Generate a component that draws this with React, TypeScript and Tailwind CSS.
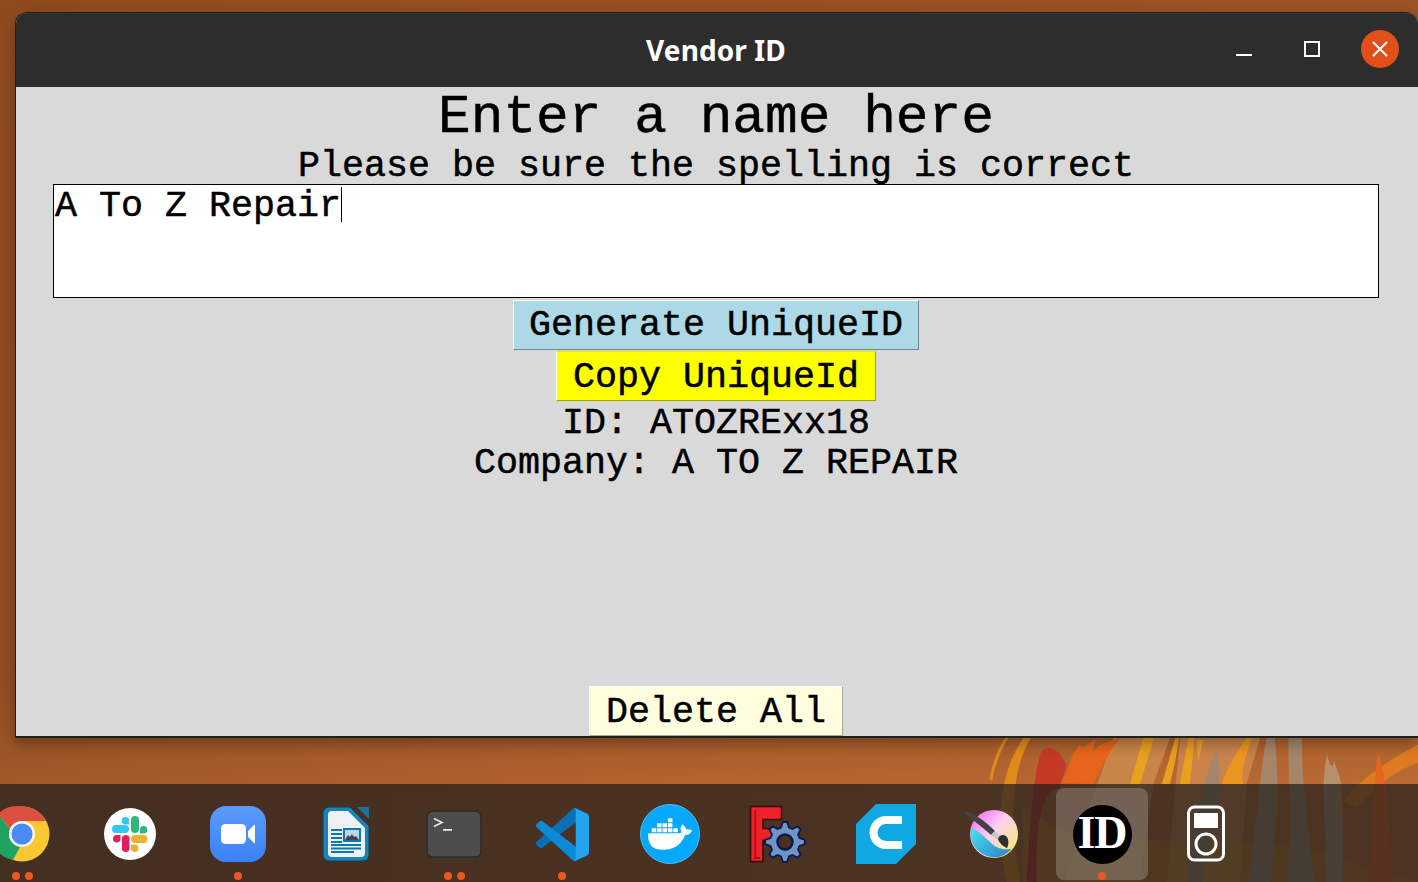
import React from "react";
import { SiDocker } from "react-icons/si";

const mono = "font-['Liberation_Mono',monospace] [-webkit-text-stroke:0.5px_#000]";

function Dots({ n }: { n: number }) {
  return (
    <div className="mt-[6px] flex h-2 items-center justify-center gap-[5px]">
      {Array.from({ length: n }).map((_, i) => (
        <span key={i} className="h-2 w-2 rounded-full bg-[#ee5620]" />
      ))}
    </div>
  );
}

function Chrome() {
  return (
    <svg viewBox="0 0 64 64" className="h-16 w-16">
      <circle cx="32" cy="32" r="27.5" fill="#fbc833" />
      <path d="M32 4.500A27.500 27.500 0 0 1 56 19H32a13 13 0 0 0-12 8L8 12A27.500 27.500 0 0 1 32 4.500Z" fill="#dd4f40" />
      <path d="M8 12l12 15a13 13 0 0 0 10 18L23 58A27.500 27.500 0 0 1 8 12Z" fill="#1ea362" />
      <circle cx="32" cy="32" r="13" fill="#f1f3f4" />
      <circle cx="32" cy="32" r="10.500" fill="#4a8af4" />
    </svg>
  );
}

function Slack() {
  return (
    <svg viewBox="0 0 64 64" className="h-16 w-16">
      <circle cx="32" cy="32" r="26" fill="#fff" />
      <rect x="14" y="23" width="17" height="8" rx="4" fill="#36c5f0" />
      <path d="M27.500 15a3.700 3.700 0 0 1 3.700 3.700V22.500h-3.700a3.750 3.750 0 0 1 0-7.500Z" fill="#36c5f0" />
      <rect x="33" y="14" width="8" height="17" rx="4" fill="#2eb67d" />
      <path d="M45.500 24a3.700 3.700 0 0 1 0 7.500H42V27.700A3.700 3.700 0 0 1 45.500 24Z" fill="#2eb67d" />
      <rect x="24" y="33" width="7.500" height="17" rx="3.750" fill="#e01e5a" />
      <path d="M15 36.700A3.700 3.700 0 0 1 18.700 33h3.800v3.700a3.750 3.750 0 0 1-7.500 0Z" fill="#e01e5a" />
      <rect x="33" y="33" width="16.500" height="8" rx="4" fill="#ecb22e" />
      <path d="M33 42.500h3.700a3.750 3.750 0 1 1-3.700 3.700Z" fill="#ecb22e" />
    </svg>
  );
}

function Zoom() {
  return (
    <svg viewBox="0 0 64 64" className="h-16 w-16">
      <defs>
        <linearGradient id="zg" x1="0" y1="0" x2="0" y2="1">
          <stop offset="0" stopColor="#5a9bfb" />
          <stop offset="1" stopColor="#3b82f6" />
        </linearGradient>
      </defs>
      <rect x="4" y="4" width="56" height="56" rx="16" fill="url(#zg)" />
      <rect x="15" y="22" width="25" height="20" rx="4.500" fill="#fff" />
      <path d="M42 29l6-6c.5-.4 1-.2 1 .5v17c0 .7-.5.9-1 .5l-6-6Z" fill="#fff" />
    </svg>
  );
}

function Writer() {
  return (
    <svg viewBox="0 0 64 64" className="h-16 w-16">
      <path d="M43 5h11a1 1 0 0 1 1 1v11Z" fill="#1c6f9f" />
      <path d="M15 5h21l19 19v29a6 6 0 0 1-6 6H15a6 6 0 0 1-6-6V11a6 6 0 0 1 6-6Z" fill="#1b82b5" stroke="#123f57" strokeWidth="1" />
      <path d="M18 9h16l17 17v25a4 4 0 0 1-4 4H18a4 4 0 0 1-4-4V13a4 4 0 0 1 4-4Z" fill="#edf1f5" />
      <g fill="#0878b8">
        <rect x="17" y="27" width="11" height="2" />
        <rect x="17" y="31" width="11" height="2" />
        <rect x="17" y="35" width="11" height="2" />
        <rect x="17" y="39" width="11" height="2" />
        <rect x="17" y="42" width="30" height="2" />
        <rect x="17" y="45.500" width="30" height="2" />
        <rect x="17" y="49" width="23" height="2" />
      </g>
      <rect x="29" y="26" width="18" height="14" fill="#0878b8" />
      <rect x="31" y="28" width="14" height="10" fill="#b9d6ea" />
      <path d="M31 38l3-5 2 2 2-3 2 3 2-1 3 4Z" fill="#444" />
    </svg>
  );
}

function Terminal() {
  return (
    <svg viewBox="0 0 64 64" className="h-16 w-16">
      <rect x="5" y="9" width="54" height="46" rx="6" fill="#4d4d4d" stroke="#2c2a28" strokeWidth="1.500" />
      <path d="M12 16.500l8 4-8 4" fill="none" stroke="#e8e8e8" strokeWidth="1.600" />
      <rect x="21" y="27" width="9" height="1.800" fill="#e8e8e8" />
    </svg>
  );
}

function VSCode() {
  return (
    <div className="flex h-16 w-16 items-center justify-center">
      <svg viewBox="0 0 100 100" className="h-[53px] w-[53px]">
        <path d="M96.4614 10.7962L75.8569 0.875542C73.4719 -0.272773 70.6217 0.211611 68.75 2.08333L1.29858 63.5832C-0.515693 65.2373 -0.513607 68.0937 1.30308 69.7452L6.81272 74.754C8.29793 76.1042 10.5347 76.2036 12.1338 74.9905L93.3609 13.3699C96.086 11.3026 100 13.2462 100 16.6667V16.4275C100 14.0265 98.6246 11.8378 96.4614 10.7962Z" fill="#0a6fb5" />
        <path d="M96.4614 89.2038L75.8569 99.1245C73.4719 100.273 70.6217 99.7884 68.75 97.9167L1.29858 36.4168C-0.515693 34.7627 -0.513607 31.9063 1.30308 30.2548L6.81272 25.246C8.29793 23.8958 10.5347 23.7964 12.1338 25.0095L93.3609 86.6301C96.086 88.6974 100 86.7538 100 83.3333V83.5725C100 85.9735 98.6246 88.1622 96.4614 89.2038Z" fill="#0c8ad8" />
        <path d="M75.8578 99.1263C73.4721 100.274 70.6219 99.7885 68.75 97.9166C71.0564 100.223 75 98.5895 75 95.3278V4.67213C75 1.41039 71.0564 -0.223106 68.75 2.08329C70.6219 0.211402 73.4721 -0.273666 75.8578 0.873633L96.4587 10.7807C98.6234 11.8217 100 14.0112 100 16.4132V83.5871C100 85.9891 98.6234 88.1786 96.4586 89.2196L75.8578 99.1263Z" fill="#23a4ee" />
      </svg>
    </div>
  );
}

function Docker() {
  return (
    <div className="flex h-16 w-16 items-center justify-center">
      <div className="flex h-[60px] w-[60px] items-center justify-center rounded-full border border-[#4dbdff] bg-[#04a9fc]">
        <SiDocker className="text-[44px] text-white" />
      </div>
    </div>
  );
}

function gearPath(cx: number, cy: number, ro: number, ri: number, teeth: number) {
  const pts: string[] = [];
  for (let i = 0; i < teeth; i++) {
    const step = (Math.PI * 2) / teeth;
    const a = i * step - Math.PI / 2;
    const list = [
      [ri, a - step * 0.34],
      [ro, a - step * 0.14],
      [ro, a + step * 0.14],
      [ri, a + step * 0.34],
    ];
    for (const [r, t] of list) pts.push(`${(cx + r * Math.cos(t)).toFixed(2)} ${(cy + r * Math.sin(t)).toFixed(2)}`);
  }
  return "M" + pts.join("L") + "Z";
}

function FreeCAD() {
  return (
    <svg viewBox="0 0 64 64" className="h-16 w-16">
      <path d="M4.500 4.500h31v13H17v9h14v12H17v21H4.500Z" fill="#ee2228" stroke="#3d0a0e" strokeWidth="1.600" />
      <path d="M8 55V8h2.500v47Z" fill="#c4121a" />
      <path d="M8 55h6v2H8Z" fill="#a80f16" />
      <path d={gearPath(39, 40, 20, 15, 8)} fill="#6f94c6" stroke="#0c1650" strokeWidth="1.800" />
      <circle cx="39" cy="40" r="7.500" fill="#4a3022" stroke="#0c1650" strokeWidth="2.500" />
    </svg>
  );
}

function Cura() {
  return (
    <svg viewBox="0 0 64 64" className="h-16 w-16">
      <path d="M22 2h40v40L42 62H2V22Z" fill="#0fa8e2" />
      <path d="M48 14H32a16.500 16.500 0 0 0 0 33h16v-8H32a8.500 8.500 0 0 1 0-17h16Z" fill="#fff" />
    </svg>
  );
}

function Krita() {
  return (
    <svg viewBox="0 0 64 64" className="h-16 w-16">
      <defs>
        <linearGradient id="kg" x1="0" y1="0" x2="1" y2="1">
          <stop offset="0" stopColor="#f05cf5" />
          <stop offset=".45" stopColor="#ffd0f0" />
          <stop offset="1" stopColor="#f6ee5a" />
        </linearGradient>
        <linearGradient id="kb" x1="0" y1="0" x2="1" y2="1">
          <stop offset="0" stopColor="#45e7ee" />
          <stop offset="1" stopColor="#2f7fc7" />
        </linearGradient>
      </defs>
      <circle cx="32" cy="32" r="24" fill="url(#kg)" />
      <path d="M9 26a24 24 0 0 0 31 28c8-4 9-7 9-7-10 1-15-1-22-8-6-6-15-13-18-13Z" fill="url(#kb)" />
      <path d="M4 9c7 2 18 9 29 20l-4 4C18 23 7 15 3 12Z" fill="#434343" />
      <path d="M33 29l5 5-3 3-6-4Z" fill="#c8c8c8" />
      <path d="M36 37c1-4 5-5 8-3 3 3 3 8 1 12-3-1-8-5-9-9Z" fill="#2e2e2e" />
    </svg>
  );
}

function IdIcon() {
  return (
    <div className="flex h-16 w-16 items-center justify-center">
      <div className="flex h-[59px] w-[59px] items-center justify-center rounded-full bg-black pb-[2px] font-['Liberation_Serif',serif] text-[46px] leading-none font-bold tracking-[-1px] text-white">
        ID
      </div>
    </div>
  );
}

function IPod() {
  return (
    <svg viewBox="0 0 64 64" className="h-16 w-16">
      <rect x="14.500" y="5" width="35" height="53" rx="6" fill="none" stroke="#fff" strokeWidth="3" />
      <rect x="20" y="11" width="24" height="15" fill="#fff" />
      <circle cx="32" cy="42" r="10" fill="none" stroke="#fff" strokeWidth="3" />
    </svg>
  );
}

function DockItem({ children, dots = 0, active = false, wide = "w-[108px]" }: { children: React.ReactNode; dots?: number; active?: boolean; wide?: string }) {
  return (
    <div className={`relative flex shrink-0 flex-col items-center pt-[18px] ${wide}`}>
      {active && <div className="absolute top-[4px] left-[8px] h-[92px] w-[92px] rounded-lg bg-white/20" />}
      <div className="relative">{children}</div>
      <div className="relative">
        <Dots n={dots} />
      </div>
    </div>
  );
}

function Wallpaper() {
  return (
    <svg viewBox="0 0 1314 432" className="absolute top-[738px] left-[980px] h-[144px] w-[438px]">
      <path d="M400 0H570L520 138 480 432H250Z" fill="#c98448" />
      <path d="M600 0H840L800 138 780 432H560Z" fill="#c9824a" />
      <path d="M130 200C300 380 700 260 1000 340L1314 432H130Z" fill="#d5891e" opacity=".45" />
      <path d="M80 432C40 260 60 100 130 0h22C90 100 90 270 120 432Z" fill="#e08a1a" />
      <path d="M28 120C40 70 55 30 75 0h10C60 40 45 80 36 130Z" fill="#e08a1a" />
      <path d="M140 432C150 250 160 120 180 50 195 15 240 30 258 80 255 110 240 130 240 150 190 150 165 240 170 432Z" fill="#c53a26" />
      <path d="M245 135C270 90 270 50 300 20 310 40 330 10 345 5L340 40 360 20 420 0C380 50 360 100 340 138Z" fill="#e8641a" />
      <path d="M450 138L490 0h32L480 138Z" fill="#e8a01e" />
      <path d="M545 138C560 90 575 40 585 0h12C590 50 580 100 570 138Z" fill="#e8a01e" />
      <path d="M600 138L625 0h18L630 138Z" fill="#e8a01e" />
      <path d="M650 5h20L655 70Z" fill="#e8a01e" />
      <path d="M725 138C740 90 770 40 800 0h15C800 50 780 100 790 138Z" fill="#e8961e" />
      <path d="M620 432C640 250 680 100 710 30 725 80 720 200 690 300L665 432Z" fill="#a5866a" />
      <path d="M805 432C825 300 840 100 860 0h24C900 130 890 300 870 432Z" fill="#a5866a" />
      <path d="M920 432C935 300 925 100 925 0h42C960 120 990 300 1005 432Z" fill="#a5866a" />
      <path d="M1030 138C1035 100 1035 70 1042 50 1048 90 1060 90 1062 70 1075 100 1078 120 1085 138L1090 432H1040Z" fill="#b4906e" />
      <path d="M1090 190C1150 110 1240 60 1314 20v55C1240 100 1180 150 1130 210Z" fill="#de7a1f" />
      <path d="M1165 432C1175 280 1180 120 1195 45 1210 90 1225 170 1230 280L1235 432Z" fill="#e4661e" />
    </svg>
  );
}

export default function App() {
  return (
    <div className="relative h-[882px] w-[1418px] overflow-hidden bg-[linear-gradient(180deg,rgba(125,62,22,0.55)_0%,rgba(125,62,22,0.45)_78%,rgba(125,62,22,0)_90%),linear-gradient(90deg,#a35a2a_0%,#b5652f_45%,#bd6d36_100%)]">
      <Wallpaper />
      <div className="relative flex h-full flex-col">
        <div className="pt-3 pl-[15px]">
          <div className="flex h-[726px] flex-col overflow-hidden rounded-t-[12px] border border-r-0 border-b-2 border-[#1f1f1f] bg-[#d9d9d9] shadow-[0_6px_14px_rgba(0,0,0,0.3)]">
            <div className="grid h-[74px] shrink-0 grid-cols-[1fr_auto_1fr] items-center border-t border-[#383838] bg-[#2d2d2d] pr-[2px]">
              <div />
              <div className="pb-[2px] font-['Noto_Sans',sans-serif] text-[28px] font-bold tracking-[0.1px] text-white">Vendor ID</div>
              <div className="flex items-center justify-end pr-[17px] pb-[3px]">
                <span className="mt-[11px] h-[2px] w-4 bg-white" />
                <span className="ml-[52px] h-4 w-4 border-2 border-white" />
                <span className="ml-[41px] flex h-[38px] w-[38px] items-center justify-center rounded-full bg-[#e2501a]">
                  <svg viewBox="0 0 16 16" className="h-4 w-4">
                    <path d="M1 1l14 14M15 1L1 15" stroke="#fff" strokeWidth="2" />
                  </svg>
                </span>
              </div>
            </div>
            <div className={`flex min-h-0 flex-1 flex-col items-center pr-[2px] text-black ${mono}`}>
              <div className="h-[54px] text-[54.500px] leading-[62px]">Enter a name here</div>
              <div className="h-[43px] text-[36.670px] leading-[50px]">Please be sure the spelling is correct</div>
              <div className="flex h-[114px] w-[1326px] shrink-0 items-start border border-black bg-white pl-[1px] text-[36.670px] leading-[42px]">
                <span>A To Z Repair</span>
                <span className="mt-[2px] h-[35px] w-[1px] bg-black" />
              </div>
              <button className="mt-[2px] flex h-[50px] items-center border border-t-white border-r-[#6d8791] border-b-[#6d8791] border-l-white bg-[#add8e6] px-[15.500px] text-[36.670px] leading-none">
                Generate UniqueID
              </button>
              <button className="mt-[1px] flex h-[50px] items-center border border-t-[#e8e800] border-r-[#a3a300] border-b-[#a3a300] border-l-white bg-[#ffff00] px-[16px] pt-[2px] text-[36.670px] leading-none">
                Copy UniqueId
              </button>
              <div className="h-[40px] text-[36.670px] leading-[44px]">ID: ATOZRExx18</div>
              <div className="h-[40px] text-[36.670px] leading-[44px]">Company: A TO Z REPAIR</div>
              <button className="mt-auto flex h-[50px] items-center border border-t-white border-r-[#a8a89a] border-b-[#a8a89a] border-l-white bg-[#ffffe0] px-[16px] pt-[3px] text-[36.670px] leading-none">
                Delete All
              </button>
            </div>
          </div>
        </div>
        <div className="mt-[46px] flex h-[98px] shrink-0 bg-[rgba(28,28,28,0.7)]">
          <div className="-ml-[32px] flex">
            <DockItem dots={2}><Chrome /></DockItem>
            <DockItem><Slack /></DockItem>
            <DockItem dots={1}><Zoom /></DockItem>
            <DockItem><Writer /></DockItem>
            <DockItem dots={2}><Terminal /></DockItem>
            <DockItem dots={1}><VSCode /></DockItem>
            <DockItem><Docker /></DockItem>
            <DockItem><FreeCAD /></DockItem>
            <DockItem><Cura /></DockItem>
            <DockItem><Krita /></DockItem>
            <DockItem dots={1} active><IdIcon /></DockItem>
            <DockItem wide="w-[100px]"><IPod /></DockItem>
          </div>
        </div>
      </div>
    </div>
  );
}
